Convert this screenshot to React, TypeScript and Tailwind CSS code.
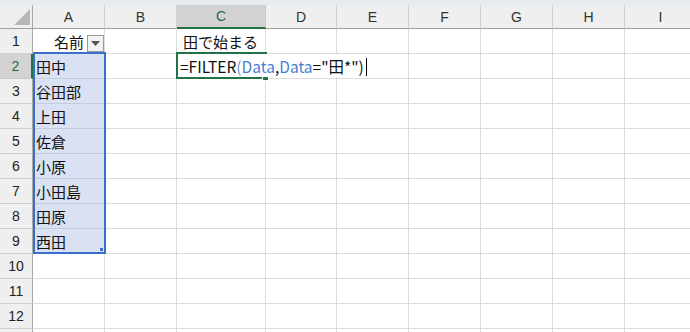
import React from "react";

const cols = ["A", "B", "C", "D", "E", "F", "G", "H", "I"];
const names: Record<number, string> = {
  2: "田中",
  3: "谷田部",
  4: "上田",
  5: "佐倉",
  6: "小原",
  7: "小田島",
  8: "田原",
  9: "西田",
};

const jp = { fontFamily: '"Noto Sans CJK JP", "Noto Sans", sans-serif' };
const hdr = { fontFamily: '"Liberation Sans", Arial, sans-serif' };

export default function App() {
  const rows = Array.from({ length: 13 }, (_, i) => i + 1);
  return (
    <div className="w-[690px] h-[332px] overflow-hidden bg-white">
      <div className="h-[5px] bg-[#e8ebee]" />
      <div className="relative grid grid-cols-[33px_72px_72px_89px_71px_72px_72px_72px_72px_72px] auto-rows-[25px] [grid-template-rows:24px]">
        {/* corner */}
        <div className="relative bg-[#efefef] border-r border-b border-r-[#a8a8a8] border-b-[#a0a0a0] h-[24px]">
          <svg className="absolute left-[14px] top-[4px]" width="16" height="16" viewBox="0 0 16 16">
            <polygon points="16,0 16,16 0,16" fill="#b7b7b7" />
          </svg>
        </div>
        {cols.map((c) => (
          <div
            key={c}
            style={hdr}
            className={
              c === "C"
                ? "h-[24px] flex items-center justify-center bg-[#d3d3d3] border-r border-r-[#c8c8c8] border-b-2 border-b-[#217346] text-[#1f6b41] text-[14px] pt-[1px]"
                : "h-[24px] flex items-center justify-center bg-[#efefef] border-r border-r-[#d0d0d0] border-b border-b-[#a0a0a0] text-[#333] text-[14px] pt-[1px]"
            }
          >
            {c}
          </div>
        ))}

        {rows.map((r) => (
          <React.Fragment key={r}>
            <div
              style={hdr}
              className={
                r === 2
                  ? "flex items-center justify-center bg-[#d3d3d3] border-r-2 border-r-[#217346] border-b border-b-[#c8c8c8] text-[#1f6b41] text-[14px]"
                  : "flex items-center justify-center bg-[#efefef] border-r border-r-[#a8a8a8] border-b border-b-[#d0d0d0] text-[#222] text-[14px]"
              }
            >
              {r}
            </div>
            {cols.map((c) => {
              const inSel = c === "A" && r >= 2 && r <= 9;
              let content: React.ReactNode = null;
              if (c === "A" && r === 1) {
                content = (
                  <>
                    <span style={jp} className="w-full text-center text-[15px] text-[#111] pl-[1px] pt-[2px]">名前</span>
                    <div className="absolute right-[0px] top-[6px] w-[17px] h-[17px] bg-[#f3f3f3] border border-[#9a9a9a] flex items-center justify-center">
                      <svg width="9" height="5" viewBox="0 0 9 5">
                        <polygon points="0,0 9,0 4.5,5" fill="#555" />
                      </svg>
                    </div>
                  </>
                );
              } else if (inSel) {
                content = (
                  <span style={jp} className="pl-[3px] pt-[2px] text-[15px] text-[#111]">
                    {names[r]}
                  </span>
                );
              } else if (c === "C" && r === 1) {
                content = (
                  <span style={jp} className="pl-[6px] pt-[2px] whitespace-nowrap text-[15px] text-[#111]">
                    田で始まる
                  </span>
                );
              }
              return (
                <div
                  key={c}
                  className={
                    (inSel
                      ? "bg-[#d9e1f2] border-r border-r-[#d9d9d9] border-b border-b-[#c3cbdc] "
                      : "border-r border-r-[#dcdcdc] border-b border-b-[#dcdcdc] ") +
                    "relative flex items-center overflow-visible"
                  }
                >
                  {content}
                </div>
              );
            })}
          </React.Fragment>
        ))}

        {/* reference selection box A2:A9 */}
        <div className="absolute left-[33px] top-[47px] w-[73px] h-[202px] border-2 border-[#3a6fc9] pointer-events-none">
          <div className="absolute right-[1px] bottom-[1px] w-[3px] h-[3px] bg-[#3a6fc9]" />
        </div>
        {/* active cell C2 */}
        <div className="absolute left-[176px] top-[47px] w-[91px] h-[27px] border-2 border-[#217346] pointer-events-none">
          <div className="absolute right-[-4px] bottom-[-4px] w-[7px] h-[6px] bg-[#217346] border border-white" />
        </div>
        {/* in-cell editor */}
        <div
          style={jp}
          className="absolute left-[178px] top-[49px] h-[23px] pr-[2px] bg-white flex items-center pt-[2px] whitespace-nowrap text-[15.5px] text-[#111] z-10"
        >
          <span className="pl-[2px]">=FILTER</span>
          <span className="text-[#6b93d6]">(</span>
          <span className="text-[#4a7fd6]">Data</span>
          <span>,</span>
          <span className="text-[#4a7fd6]">Data</span>
          <span>="田*")</span>
          <span className="ml-[2px] inline-block w-[1px] h-[18px] bg-black" />
        </div>
      </div>
    </div>
  );
}
